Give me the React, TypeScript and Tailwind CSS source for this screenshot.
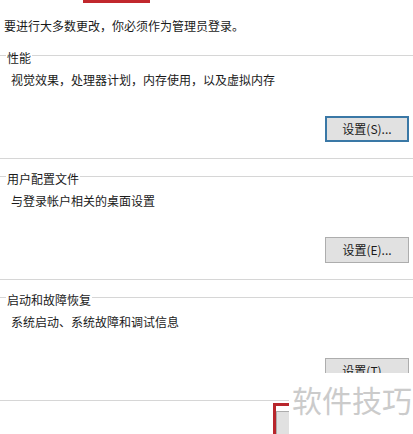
import React from "react";

const font = { fontFamily: '"Noto Sans CJK SC", "Noto Sans", sans-serif' };

function Group({
  title,
  desc,
  btn,
  focused,
}: {
  title: string;
  desc: string;
  btn: string;
  focused?: boolean;
}) {
  return (
    <div className="flex flex-col">
      <div className="flex h-[16px] items-start">
        <div className="mt-[6px] h-px w-[6px] bg-[#d6d6d6]" />
        <span className="px-[1px] text-[12px] leading-[16px] text-[#1a1a1a] mt-[1px]">{title}</span>
        <div className="mt-[6px] h-px flex-1 bg-[#d6d6d6]" />
      </div>
      <div className="mt-[7px] pl-[11px] text-[12px] leading-[16px] text-[#1a1a1a]">{desc}</div>
      <div className="mt-[28px] flex justify-end pr-[4px]">
        <div
          className={
            focused
              ? "flex h-[26px] w-[84px] items-center justify-center border-2 border-[#3a78a6] bg-[#e1e1e1] text-[12px] text-[#1a1a1a]"
              : "flex h-[26px] w-[84px] items-center justify-center border border-[#adadad] bg-[#e1e1e1] text-[12px] text-[#1a1a1a]"
          }
        >
          {btn}
        </div>
      </div>
      <div className="mt-[16px] h-px bg-[#d6d6d6]" />
    </div>
  );
}

export default function App() {
  return (
    <div className="relative h-[434px] w-[413px] overflow-hidden bg-white" style={font}>
      <div className="absolute left-[83px] top-[-30px] h-[33px] w-[67px] border-[3px] border-[#c1272d]" />
      <div className="pl-[4px] pt-[18px] text-[12px] leading-[16px] text-[#1a1a1a]">
        要进行大多数更改，你必须作为管理员登录。
      </div>
      <div className="mt-[15px] flex flex-col gap-[11px]">
        <Group title="性能" desc="视觉效果，处理器计划，内存使用，以及虚拟内存" btn="设置(S)..." focused />
        <Group title="用户配置文件" desc="与登录帐户相关的桌面设置" btn="设置(E)..." />
        <Group title="启动和故障恢复" desc="系统启动、系统故障和调试信息" btn="设置(T)..." />
      </div>
      <div className="mt-[10px] flex pl-[276px]">
        <div className="h-[26px] w-[80px] border border-[#adadad] bg-[#e1e1e1]" />
      </div>
      <div className="absolute left-[273px] top-[403px] h-[60px] w-[90px] border-[3px] border-[#b8262c]" />
      <div className="absolute left-[289px] top-[373px] flex h-[61px] w-[124px] items-start bg-white pl-[3px] pt-[8px]">
        <span className="text-[30px] leading-[36px] text-[#cbcbcb]">软件技巧</span>
      </div>
    </div>
  );
}
